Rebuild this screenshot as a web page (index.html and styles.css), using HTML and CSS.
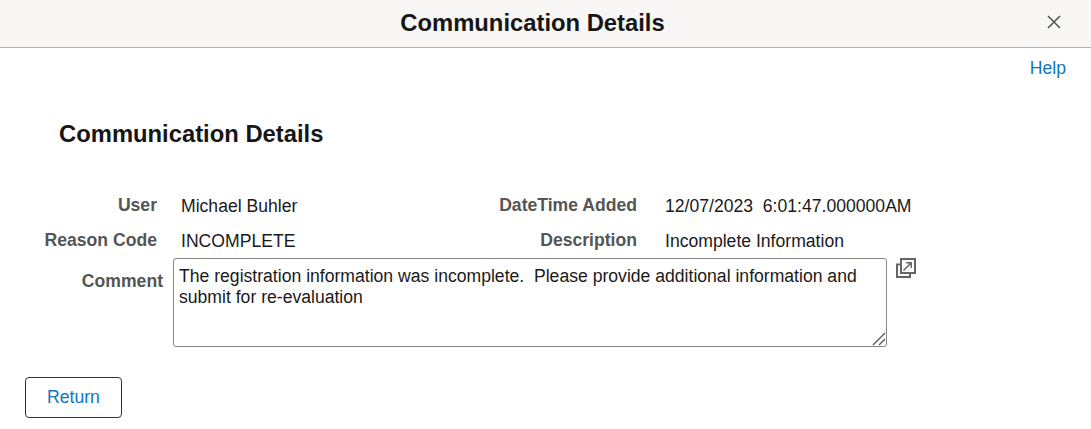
FILE: index.html
```html
<!DOCTYPE html>
<html lang="en">
<head>
  <meta charset="UTF-8">
  <meta name="viewport" content="width=device-width, initial-scale=1.0">
  <title>Communication Details</title>
  <link rel="stylesheet" href="styles.css">
</head>
<body>
  <header class="title-bar">
    <h1>Communication Details</h1>
    <button class="close-btn" type="button" aria-label="Close">
      <svg width="14" height="14" viewBox="0 0 14 14"><path d="M1 1L13 13M13 1L1 13" stroke="#555" stroke-width="1.6" fill="none"/></svg>
    </button>
  </header>

  <div class="help-row"><a href="#">Help</a></div>

  <h2 class="page-title">Communication Details</h2>

  <main class="details">
    <div class="row">
      <span class="label label-left">User</span>
      <span class="value value-left">Michael Buhler</span>
      <span class="label label-right">DateTime Added</span>
      <span class="value">12/07/2023  6:01:47.000000AM</span>
    </div>
    <div class="row row-reason">
      <span class="label label-left">Reason Code</span>
      <span class="value value-left">INCOMPLETE</span>
      <span class="label label-right">Description</span>
      <span class="value">Incomplete Information</span>
    </div>
    <div class="comment-row">
      <label class="comment-label" for="comment">Comment</label>
      <div class="comment-wrap">
        <textarea id="comment" class="comment-box">The registration information was incomplete.  Please provide additional information and submit for re-evaluation</textarea>
        <svg class="grip" width="14" height="14" viewBox="0 0 14 14" fill="none" stroke="#555" stroke-width="1.3"><path d="M1 13L13 1M7 13L13 7"/></svg>
      </div>
      <a class="expand-icon" href="#" aria-label="Expand">
        <svg width="20" height="20" viewBox="0 0 20 20" fill="none" stroke="#666">
          <rect x="5" y="1" width="14" height="14" stroke-width="2"/>
          <path d="M5 6.5H1V19H14V15" stroke-width="2"/>
          <path d="M7.5 12.5L14.5 5.5M10 4.8H15.2V10" stroke-width="1.5"/>
        </svg>
      </a>
    </div>
  </main>

  <button class="return-btn" type="button">Return</button>
</body>
</html>
```

FILE: styles.css
```css
/* Basic styles */
body {
  margin: 0;
  font-family: "Liberation Sans", Arial, sans-serif;
  font-size: 17.6px;
  color: #1a1a1a;
  background: #fff;
}
a {
  color: #0f76bf;
  text-decoration: none;
}
.title-bar {
  height: 47px;
  background: #f8f7f5;
  border-bottom: 1px solid #b3b3b3;
  box-sizing: content-box;
  display: flex;
  align-items: center;
  justify-content: center;
  padding-right: 26px;
  position: relative;
}
.title-bar h1 {
  margin: -2px 0 0;
  font-size: 23.8px;
  font-weight: bold;
  color: #161616;
}
.close-btn {
  position: absolute;
  right: 30px;
  top: 15px;
  width: 14px;
  height: 14px;
  padding: 0;
  border: none;
  background: none;
  display: flex;
}
.help-row {
  display: flex;
  justify-content: flex-end;
  padding: 10px 25px 0 0;
  line-height: 20px;
}
.page-title {
  margin: 0;
  padding: 42px 0 0 59px;
  font-size: 23.8px;
  line-height: 28px;
  color: #161616;
}
.details {
  padding-top: 48px;
}
.row {
  display: flex;
  line-height: 20px;
}
.row-reason {
  margin-top: 15px;
}
.label {
  font-weight: bold;
  color: #555;
  text-align: right;
  position: relative;
  top: -1px;
}
.label-left {
  width: 157px;
}
.value-left {
  margin-left: 24px;
  width: 200px;
}
.label-right {
  width: 256px;
}
.value {
  white-space: pre;
}
.row .value:last-child {
  margin-left: 28px;
}
.comment-row {
  display: flex;
  align-items: flex-start;
  margin-top: 7px;
}
.comment-label {
  width: 163px;
  text-align: right;
  font-weight: bold;
  color: #555;
  line-height: 20px;
  padding-top: 13px;
}
.comment-wrap {
  position: relative;
  margin-left: 10px;
  display: flex;
}
.comment-box {
  box-sizing: border-box;
  width: 714px;
  height: 89px;
  margin: 0;
  padding: 7px 5px;
  border: 1px solid #8a8782;
  border-radius: 3px;
  font-family: inherit;
  font-size: 17.6px;
  line-height: 21px;
  color: #1a1a1a;
  resize: none;
}
.grip {
  position: absolute;
  right: 1px;
  bottom: 1px;
}
.expand-icon {
  margin-left: 9px;
  display: flex;
}
.return-btn {
  display: block;
  box-sizing: border-box;
  width: 97px;
  height: 41px;
  margin: 30px 0 0 25px;
  background: #fff;
  border: 1px solid #333;
  border-radius: 4px;
  font-family: inherit;
  font-size: 17.6px;
  color: #0f76bf;
}
```
